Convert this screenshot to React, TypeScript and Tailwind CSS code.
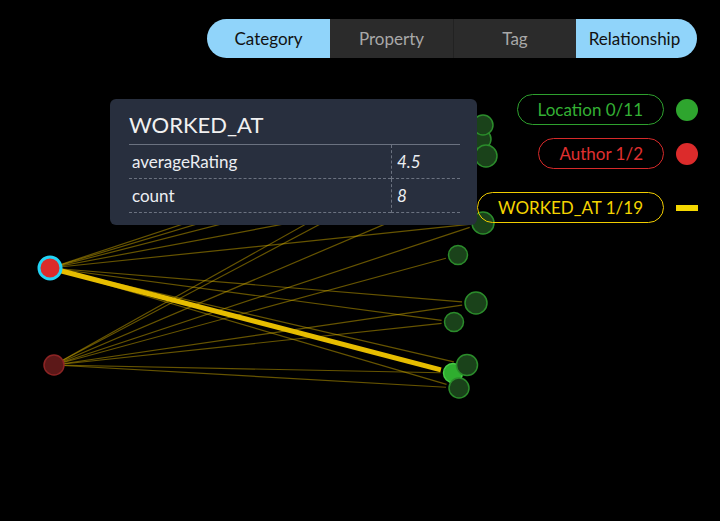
import React from 'react';

type Node = { id: string; x: number; y: number; r: number };

const A = { x: 50, y: 268 };
const B = { x: 54, y: 365 };

const locations: Node[] = [
  { id: 'n2', x: 481, y: 139, r: 10 },
  { id: 'n1', x: 483, y: 125, r: 10 },
  { id: 'n3', x: 486, y: 156, r: 11 },
  { id: 'n4', x: 465, y: 190, r: 10 },
  { id: 'n5', x: 483, y: 223, r: 11 },
  { id: 'n6', x: 458, y: 255, r: 9.5 },
  { id: 'n7', x: 476, y: 303, r: 11 },
  { id: 'n8', x: 454, y: 322, r: 9.5 },
  { id: 'n10', x: 453, y: 373, r: 9.5 },
  { id: 'n9', x: 467, y: 365, r: 10.5 },
  { id: 'n11', x: 459, y: 388, r: 10 },
];

const byId = (id: string) => locations.find(n => n.id === id)!;

const edges: { from: { x: number; y: number }; to: string }[] = [
  ...['n1', 'n2', 'n3', 'n4', 'n5', 'n7', 'n8', 'n9', 'n11'].map(to => ({ from: A, to })),
  ...['n1', 'n2', 'n4', 'n5', 'n6', 'n7', 'n8', 'n10', 'n11'].map(to => ({ from: B, to })),
];

// stop the line a little before the target circle
function endPoint(from: { x: number; y: number }, n: Node) {
  const dx = n.x - from.x;
  const dy = n.y - from.y;
  const len = Math.sqrt(dx * dx + dy * dy);
  const k = (len - n.r - 3) / len;
  return { x: from.x + dx * k, y: from.y + dy * k };
}

function Graph() {
  const thick = endPoint(A, byId('n10'));
  return (
    <svg className="absolute inset-0" width={720} height={521}>
      {edges.map((e, i) => {
        const p = endPoint(e.from, byId(e.to));
        return (
          <line key={i} x1={e.from.x} y1={e.from.y} x2={p.x} y2={p.y} stroke="#e3bb00" strokeOpacity={0.45} strokeWidth={1.2} />
        );
      })}
      <line x1={A.x} y1={A.y} x2={thick.x} y2={thick.y} stroke="#e6bd00" strokeWidth={5} />
      {locations.map(n =>
        n.id === 'n10' ? (
          <circle key={n.id} cx={n.x} cy={n.y} r={n.r} fill="#2fae2f" stroke="#46cc46" strokeWidth={1.5} />
        ) : (
          <circle key={n.id} cx={n.x} cy={n.y} r={n.r} fill="#1a421a" stroke="#2b8c2b" strokeWidth={1.5} />
        )
      )}
      <circle cx={B.x} cy={B.y} r={10} fill="#5c1818" stroke="#8c2424" strokeWidth={1.5} />
      <circle cx={A.x} cy={A.y} r={11} fill="#dc2b2b" stroke="#22d3f5" strokeWidth={3} />
    </svg>
  );
}

function Tabs() {
  return (
    <div className="flex justify-end pt-[19px] pr-[23px]">
      <div className="flex h-[39px] rounded-full overflow-hidden text-[17px]">
        <div className="w-[123px] flex items-center justify-center bg-[#90d4fa] text-[#111]">Category</div>
        <div className="w-[123px] flex items-center justify-center bg-[#2b2b2b] text-[#a8a8a8]">Property</div>
        <div className="w-[123px] flex items-center justify-center bg-[#2b2b2b] text-[#a8a8a8] border-l border-[#222]">Tag</div>
        <div className="w-[121px] flex items-center justify-center bg-[#90d4fa] text-[#111] pr-[4px]">Relationship</div>
      </div>
    </div>
  );
}

function Legend() {
  return (
    <div className="flex flex-col items-end pr-[22px] mt-[36px] text-[17px]">
      <div className="flex items-center gap-3">
        <div className="h-[31px] px-[20px] flex items-center rounded-full border-[1.5px] border-[#2ea02e] text-[#34b034]">Location 0/11</div>
        <div className="w-[22px] h-[22px] rounded-full bg-[#2ea52e]" />
      </div>
      <div className="flex items-center gap-3 mt-[13px]">
        <div className="h-[31px] px-[20px] flex items-center rounded-full border-[1.5px] border-[#d62a2a] text-[#e03030]">Author 1/2</div>
        <div className="w-[22px] h-[22px] rounded-full bg-[#dc2b2b]" />
      </div>
      <div className="flex items-center gap-3 mt-[23px]">
        <div className="h-[31px] px-[20px] flex items-center rounded-full border-[1.5px] border-[#f0cc00] text-[#f5d400]">WORKED_AT 1/19</div>
        <div className="w-[22px] h-[6px] bg-[#f5d800]" />
      </div>
    </div>
  );
}

function Tooltip() {
  const rows = [
    ['averageRating', '4.5'],
    ['count', '8'],
  ];
  return (
    <div className="absolute left-[110px] top-[99px] w-[367px] h-[126px] rounded-md bg-[#282f3e] pt-[13px] pl-[19px] pr-[17px]">
      <div className="text-[22px] leading-[26px] text-[#f1f1f1] pb-[6px] border-b border-[#6b7280]">WORKED_AT</div>
      <div className="grid grid-cols-[262px_1fr] text-[17px] text-[#eceef2]">
        {rows.map(([k, v]) => (
          <React.Fragment key={k}>
            <div className="h-[34px] flex items-center pl-[3px] border-b border-dashed border-[#6b7280]">{k}</div>
            <div className="h-[34px] flex items-center pl-[5px] italic border-b border-l border-dashed border-[#6b7280]">{v}</div>
          </React.Fragment>
        ))}
      </div>
    </div>
  );
}

export default function App() {
  return (
    <div className="relative w-[720px] h-[521px] bg-black overflow-hidden" style={{ fontFamily: 'Lato, "Open Sans", sans-serif' }}>
      <Graph />
      <div className="relative">
        <Tabs />
        <Legend />
      </div>
      <Tooltip />
    </div>
  );
}
